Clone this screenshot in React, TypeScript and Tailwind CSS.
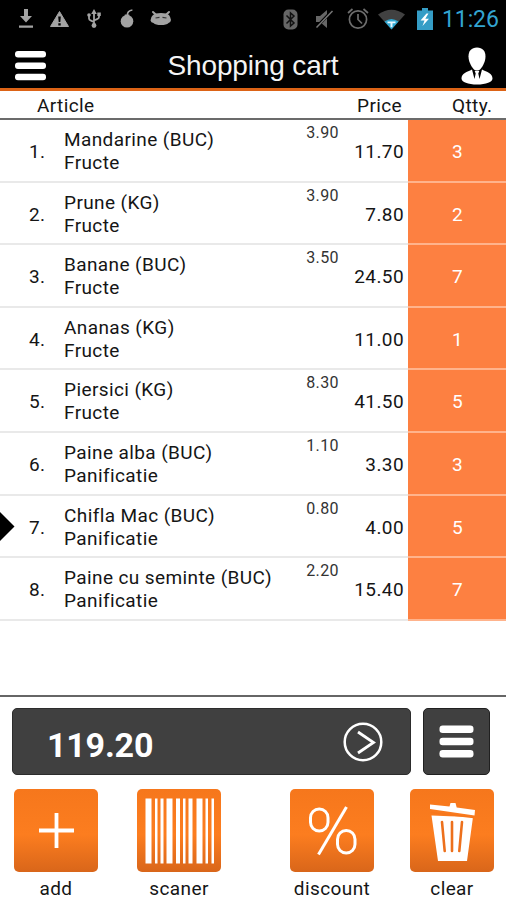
import React from 'react';

interface CartItem {
    name: string;
    category: string;
    unitPrice?: string;
    total: string;
    quantity: number;
}

const ITEMS: CartItem[] = [
    { name: 'Mandarine (BUC)', category: 'Fructe', unitPrice: '3.90', total: '11.70', quantity: 3 },
    { name: 'Prune (KG)', category: 'Fructe', unitPrice: '3.90', total: '7.80', quantity: 2 },
    { name: 'Banane (BUC)', category: 'Fructe', unitPrice: '3.50', total: '24.50', quantity: 7 },
    { name: 'Ananas (KG)', category: 'Fructe', total: '11.00', quantity: 1 },
    { name: 'Piersici (KG)', category: 'Fructe', unitPrice: '8.30', total: '41.50', quantity: 5 },
    { name: 'Paine alba (BUC)', category: 'Panificatie', unitPrice: '1.10', total: '3.30', quantity: 3 },
    { name: 'Chifla Mac (BUC)', category: 'Panificatie', unitPrice: '0.80', total: '4.00', quantity: 5 },
    { name: 'Paine cu seminte (BUC)', category: 'Panificatie', unitPrice: '2.20', total: '15.40', quantity: 7 },
];

const SELECTED_INDEX = 6;

// x and width of every barcode stripe
const BARS = [
    [8.5, 6], [18, 2.5], [23.5, 3], [29.5, 6], [39, 4], [46, 2.5],
    [51.5, 4], [59.5, 6], [68.5, 2.5], [74.5, 2.5],
];

const StatusBar: React.FC = () => (
    <div className="flex h-[38px] items-center justify-between pl-[18px] pr-[8px]">
        <div className="flex items-center text-[#a3a3a3]">
            <svg width="16" height="20" viewBox="0 0 16 20" fill="currentColor">
                <path d="M6 0h4v7h4l-6 6.5L2 7h4zM1 16.500h14v2.300H1z" />
            </svg>
            <svg className="ml-[15px]" width="21" height="19" viewBox="0 0 21 19">
                <path d="M10.5 1.5 19.500 16.500H1.500z" fill="currentColor" stroke="currentColor" strokeLinejoin="round" />
                <path d="M9.2 6.5h2.6l-.5 5.500H9.7zM9.300 13.300h2.400v2.200H9.300z" fill="#000" />
            </svg>
            <svg className="ml-[17px]" width="14" height="20" viewBox="0 0 14 20">
                <g fill="none" stroke="currentColor" strokeWidth="1.8">
                    <path d="M7 4v13M2 6v3.500q0 1.500 2 2.200L7 13M12 5v3q0 1.500-2 2.200L7 11.500" />
                </g>
                <path d="M7 0l2.800 5H4.200zM10.300 3.500h3.500V7h-3.500z" fill="currentColor" />
                <circle cx="2" cy="6" r="1.800" fill="currentColor" />
                <circle cx="7" cy="16.500" r="2.400" fill="currentColor" />
            </svg>
            <svg className="ml-[19px]" width="15" height="20" viewBox="0 0 15 20">
                <circle cx="7" cy="12.300" r="6.300" fill="currentColor" />
                <path d="M4.800 5.500h4.500v3H4.800z" fill="currentColor" />
                <path d="M7.200 7c0-3 1-5.600 5.200-6" fill="none" stroke="currentColor" strokeWidth="1.700" />
            </svg>
            <svg className="ml-[15px]" width="22" height="19" viewBox="0 0 22 19">
                <path d="M3 2l3.500 3.300M19 2l-3.500 3.300" stroke="currentColor" strokeWidth="2" strokeLinecap="round" />
                <path d="M3 5Q5 3 11 3T19 5q1.500 2 2 5-.3 2.500-2.500 3-2 2-7.500 2T3.500 13Q1 12.500.500 10.500.500 7 3 5z" fill="currentColor" />
                <path d="M5.500 8l4-.7M12.500 7.300l4 .7" stroke="#333" strokeWidth="1.200" />
            </svg>
        </div>
        <div className="flex items-center">
            <svg width="15" height="21" viewBox="0 0 15 21">
                <rect x=".5" y=".5" width="14" height="20" rx="5" fill="#666" />
                <path d="M3.500 6.500l7.500 7.500-3.500 3V4L11 7l-7.500 7.500" fill="none" stroke="#111" strokeWidth="1.500" />
            </svg>
            <svg className="ml-[16px]" width="20" height="20" viewBox="0 0 20 20">
                <path d="M2 7h4l7-6v18l-7-6H2z" fill="#666" />
                <path d="M17.500 2.500L2 18.500" stroke="#000" strokeWidth="3" />
                <path d="M18.500 2L2.500 18.500" stroke="#777" strokeWidth="1.500" />
            </svg>
            <svg className="ml-[13px]" width="22" height="22" viewBox="0 0 22 22" fill="none" stroke="#6d6d6d" strokeWidth="1.700">
                <circle cx="11" cy="11.500" r="8.600" />
                <path d="M11 6v5.500l4 4M1 5L5.500 1M21 5L16.500 1" />
            </svg>
            <svg className="ml-[9px]" width="27" height="21" viewBox="0 0 27 21">
                <path d="M0 5.500Q13.500-4 27 5.500L13.500 20.500z" fill="#414141" />
                <path d="M6.500 12.500Q13.500 7.500 20.500 12.500L13.500 20.500z" fill="#2fa6cf" />
                <path d="M9.500 12.500h8v1.800h-3v4h-2v-4h-3z" fill="#e8f8ff" />
            </svg>
            <svg className="ml-[12px]" width="16" height="23" viewBox="0 0 16 23">
                <path d="M5 0h6v2.500h5V22H0V2.500h5z" fill="#359dc6" />
                <path d="M9.500 5.500L3.500 12.500h4L5.500 18 12 10.700H8.300L11.500 5.500z" fill="#fff" />
            </svg>
            <span className="ml-[9px] w-[56px] text-[23px] leading-none tracking-[-0.1px] text-[#33a5d1]">11:26</span>
        </div>
    </div>
);

const TitleBar: React.FC = () => (
    <div className="flex h-[50px] items-center justify-between pl-[15px] pr-[13px] pt-[5px]">
        <svg width="32" height="30" viewBox="0 0 32 30" fill="#fff">
            <rect width="31" height="6.500" rx="3" />
            <rect y="11.400" width="31" height="6.500" rx="3" />
            <rect y="22.700" width="31" height="6.500" rx="3" />
        </svg>
        <h1 className="mr-[2px] font-['Liberation_Sans',Arial,sans-serif] text-[28px] leading-none tracking-[-0.15px] text-[#f4f4f4]">
            Shopping cart
        </h1>
        <svg width="32" height="38" viewBox="0 0 32 38" fill="#fff">
            <path d="M16 .5c5.600 0 8.500 3.700 8.500 9 0 4.500-2.500 9.500-5 12.500-2 2-5 2-7 0-2.500-3-5-8-5-12.500 0-5.300 2.900-9 8.500-9z" />
            <path d="M11 22.500C6 25 .5 26 .5 31.500.5 35 7 37.500 16 37.500S31.500 35 31.500 31.500C31.500 26 26 25 21 22.500l-2.500 9.500-1.200-5.500 1-2.500h-4.600l1 2.500-1.200 5.500z" />
        </svg>
    </div>
);

const CartRow: React.FC<{ item: CartItem; index: number }> = ({ item, index }) => (
    <div className="relative flex h-[62.6px]">
        {index === SELECTED_INDEX && (
            <svg className="absolute left-0 top-[16px]" width="15" height="29" viewBox="0 0 15 29">
                <path d="M0 0l14.500 14.500L0 29z" />
            </svg>
        )}
        <div className="flex w-[64px] items-center border-b-2 border-[#e9e9e9] pl-[29px] pt-[4px]">{index + 1}.</div>
        <div className="flex-1 whitespace-nowrap border-b-2 border-[#e9e9e9] pt-[8px] leading-[23px]">
            <div>{item.name}</div>
            <div>{item.category}</div>
        </div>
        <div className="w-[50px] border-b-2 border-[#e9e9e9] pt-[5px] text-right text-[16px] leading-[16px] text-[#333]">
            {item.unitPrice}
        </div>
        <div className="flex w-[69px] items-center justify-end border-b-2 border-[#e9e9e9] pr-[4px] pt-[4px]">
            {item.total}
        </div>
        <div className="flex w-[98px] items-center justify-center border-b-2 border-[#ffb38c] bg-[#fd8041] pl-px pt-[4px] text-white">
            {item.quantity}
        </div>
    </div>
);

interface ActionButtonProps {
    label: string;
    children: React.ReactNode;
}

const ActionButton: React.FC<ActionButtonProps> = ({ label, children }) => (
    <div className="flex w-[84px] flex-col items-center">
        <div className="h-[83px] w-[84px] rounded-[5px] bg-linear-to-b from-[#f6771c] from-0% via-[#fc7d1f] via-55% to-[#d9661a]">
            <svg width="84" height="83" viewBox="0 0 84 83">{children}</svg>
        </div>
        <span className="mt-[5px] leading-[23px]">{label}</span>
    </div>
);

const App: React.FC = () => (
    <div className="flex h-[900px] w-[506px] flex-col overflow-hidden bg-white font-[Roboto,sans-serif] text-[19px] tracking-[0.4px] text-[#151515]">
        <header className="border-b-[3px] border-[#dc6316] bg-black">
            <StatusBar />
            <TitleBar />
        </header>

        <div className="flex h-[29px] items-center border-b-2 border-[#6b6b6b] pt-[2px] leading-none">
            <span className="w-[357px] pl-[37px]">Article</span>
            <span className="w-[95px]">Price</span>
            <span>Qtty.</span>
        </div>

        <main className="h-[575px]">
            {ITEMS.map((item, index) => (
                <CartRow key={item.name} item={item} index={index} />
            ))}
        </main>

        <footer className="flex-1 border-t-2 border-[#666]">
            <div className="flex gap-[12px] pl-[12px] pt-[11px]">
                <div className="flex h-[67px] w-[399px] items-center justify-between rounded-[5px] border border-[#2c2c2c] bg-[#404040] pl-[34px] pr-[27px]">
                    <span className="pt-[7px] text-[34px] font-bold leading-none tracking-[-0.2px] text-white">119.20</span>
                    <svg width="40" height="40" viewBox="0 0 40 40" fill="none" stroke="#fff">
                        <circle cx="20" cy="20" r="18.300" strokeWidth="2.500" />
                        <path d="M15 10l15.500 10.500L15 31" strokeWidth="2.800" />
                    </svg>
                </div>
                <div className="flex h-[67px] w-[67px] items-center justify-center rounded-[5px] border border-[#202020] bg-[#404040]">
                    <svg width="35" height="33" viewBox="0 0 35 33" fill="#fff">
                        <rect x=".5" y=".5" width="34" height="7.500" rx="3.200" />
                        <rect x=".5" y="12.700" width="34" height="7.500" rx="3.200" />
                        <rect x=".5" y="25" width="34" height="7.500" rx="3.200" />
                    </svg>
                </div>
            </div>

            <div className="flex pl-[14px] pt-[14px]">
                <ActionButton label="add">
                    <path d="M25 41.500h35M42.500 24v35" stroke="#fff" strokeWidth="3.800" />
                </ActionButton>
                <div className="ml-[39px]">
                    <ActionButton label="scaner">
                        {BARS.map(([x, width]) => (
                            <rect key={x} x={x} y="9.500" width={width} height="65" fill="#fff" />
                        ))}
                    </ActionButton>
                </div>
                <div className="ml-[69px]">
                    <ActionButton label="discount">
                        <g fill="none" stroke="#fff" strokeWidth="3">
                            <rect x="20.500" y="20" width="17.500" height="22" rx="8.700" />
                            <rect x="47.500" y="41.500" width="17.500" height="22.500" rx="8.700" />
                            <path d="M56.500 18L28.500 65.500" />
                        </g>
                    </ActionButton>
                </div>
                <div className="ml-[36px]">
                    <ActionButton label="clear">
                        <path d="M20 15.500l19.500 2 1-3.500h5l1.200 4.500L65 21l-.5 5.500L20 20z" fill="#fff" />
                        <path d="M21.500 26.500l18 .8 23.500.7-6 44H28z" fill="#fff" />
                        <g stroke="#ed701c" strokeWidth="2.600" strokeLinecap="round">
                            <path d="M32 33l2.700 29M42 33v29M52 33l-2.700 29" />
                        </g>
                        <path d="M21 23.500l42.500 5" stroke="#f6771c" strokeWidth="1.300" />
                    </ActionButton>
                </div>
            </div>
        </footer>
    </div>
);

export default App;
